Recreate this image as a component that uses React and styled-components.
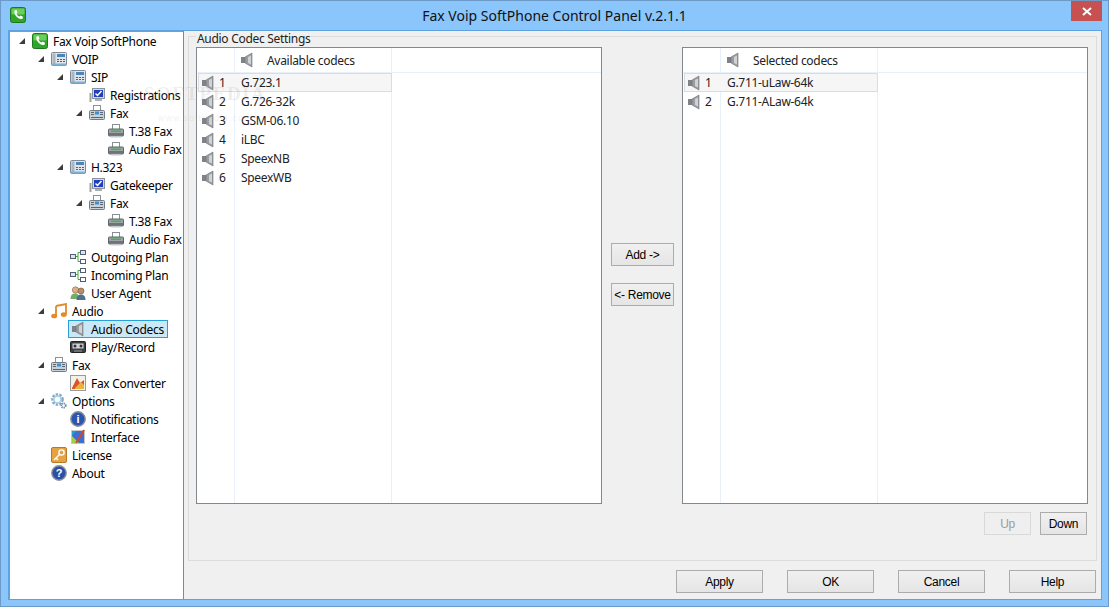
import React from 'react';
import styled, {createGlobalStyle} from 'styled-components';

const GlobalStyle = createGlobalStyle`
  html, body {
    margin: 0;
    padding: 0;
    overflow: hidden;
  }
  body {
    font-family: "Noto Sans", "Open Sans", sans-serif;
    font-size: 12px;
    letter-spacing: -0.3px;
    color: #000;
  }
`;

const Window = styled.div`
  box-sizing: border-box;
  width: 1109px;
  height: 607px;
  display: flex;
  flex-direction: column;
  background: #8ac6fb;
  border: 1px solid #6c99c6;
  position: relative;
  overflow: hidden;
`;

const TitleBar = styled.div`
  height: 29px;
  flex: none;
  display: flex;
  align-items: flex-start;
  padding: 0 6px 0 9px;
`;

const AppIcon = styled.div`
  width: 16px;
  height: 16px;
  margin-top: 6px;
`;

const Title = styled.div`
  flex: 1;
  text-align: center;
  font-size: 14px;
  letter-spacing: 0;
  line-height: 30px;
  padding-left: 12px;
  color: #111;
`;

const CloseButton = styled.div`
  width: 31px;
  height: 20px;
  background: #c75050;
  display: flex;
  align-items: center;
  justify-content: center;
`;

const Client = styled.div`
  flex: 1;
  margin: 0 6px 6px 7px;
  display: flex;
  border: 1px solid #5ea3e0;
  min-height: 0;
`;

const TreePanel = styled.div`
  width: 174px;
  flex: none;
  background: #fff;
  border-right: 1px solid #7b8a99;
  box-shadow: inset 1px 1px 0 #8a99a8;
  padding-top: 1px;
`;

const TreeRow = styled.div`
  height: 18px;
  display: flex;
  align-items: center;
  padding-left: ${p => p.$level * 19}px;
  white-space: nowrap;
`;

const ArrowSlot = styled.div`
  width: 21px;
  flex: none;
  display: flex;
  align-items: center;
  padding-left: 10px;
  box-sizing: border-box;
`;

const TreeArrow = styled.div`
  width: 0;
  height: 0;
  border-style: solid;
  border-width: 0 0 6px 6px;
  border-color: transparent transparent #3c3c3c transparent;
`;

const TreeItem = styled.div`
  height: 18px;
  box-sizing: border-box;
  display: flex;
  align-items: center;
  gap: 5px;
  padding: 0 3px 0 1px;
  border: 1px solid ${p => (p.$selected ? '#26a0da' : 'transparent')};
  background: ${p => (p.$selected ? '#cbe8f6' : 'transparent')};
`;

const TreeIcon = styled.div`
  width: 16px;
  height: 16px;
  flex: none;
  display: flex;
`;

const MainPanel = styled.div`
  flex: 1;
  display: flex;
  flex-direction: column;
  background: #f0f0f0;
  padding: 5px 4px 0 4px;
  min-width: 0;
`;

const GroupBox = styled.div`
  position: relative;
  height: 525px;
  box-sizing: border-box;
  border: 1px solid #dcdcdc;
  padding: 10px 8px 0 7px;
  display: flex;
  flex-direction: column;
`;

const GroupLabel = styled.div`
  position: absolute;
  left: 7px;
  top: -6px;
  padding: 0 1px;
  background: #f0f0f0;
  line-height: 15px;
  color: #222;
`;

const ListsRow = styled.div`
  display: flex;
  height: 457px;
`;

const ListBox = styled.div`
  width: 406px;
  box-sizing: border-box;
  flex: none;
  border: 1px solid #828790;
  background:
    linear-gradient(#e8f0fa, #e8f0fa) 37px 0 / 1px 100% no-repeat,
    linear-gradient(#e8f0fa, #e8f0fa) 194px 0 / 1px 100% no-repeat,
    #fff;
`;

const ListHeader = styled.div`
  height: 25px;
  box-sizing: border-box;
  display: flex;
  align-items: center;
  padding-left: 42px;
  border-bottom: 1px solid #e8f0fa;
  color: #222;
`;

const HeaderLabel = styled.span`
  margin-left: 12px;
`;

const ListRow = styled.div`
  height: 19px;
  box-sizing: border-box;
  margin-left: 1px;
  width: 194px;
  display: grid;
  grid-template-columns: 36px 1fr;
  align-items: center;
  border: 1px solid ${p => (p.$selected ? '#d9dce2' : 'transparent')};
  background: ${p => (p.$selected ? '#f6f6f7' : 'transparent')};
  color: #222;
`;

const IndexCell = styled.div`
  display: flex;
  align-items: center;
  padding-left: 1px;
  gap: 3px;
`;

const NameCell = styled.div`
  padding-left: 6px;
`;

const MoveColumn = styled.div`
  flex: 1;
  display: flex;
  flex-direction: column;
  gap: 17px;
  justify-content: center;
  padding: 0 8px 2px 9px;
`;

const Button = styled.button`
  box-sizing: border-box;
  font-family: "Liberation Sans", sans-serif;
  font-size: 12px;
  letter-spacing: -0.3px;
  height: 23px;
  width: ${p => p.$width || 87}px;
  padding: 0;
  border: 1px solid ${p => (p.disabled ? '#d9d9d9' : '#acacac')};
  background: ${p => (p.disabled ? '#efefef' : 'linear-gradient(#f0f0f0, #e5e5e5)')};
  color: ${p => (p.disabled ? '#9c9c9c' : '#000')};
`;

const OrderRow = styled.div`
  display: flex;
  justify-content: flex-end;
  gap: 9px;
  margin-top: 8px;
  padding-right: 1px;
`;

const FooterRow = styled.div`
  display: flex;
  justify-content: flex-end;
  gap: 24px;
  margin-top: 9px;
  padding-right: 1px;
`;

const Watermark = styled.div`
  position: absolute;
  left: 143px;
  top: 83px;
  pointer-events: none;
  color: rgba(150, 150, 150, 0.16);
  font-family: "Liberation Serif", serif;
  font-size: 19px;
  font-weight: bold;
  letter-spacing: 1.5px;
  line-height: 20px;
`;

const WatermarkUrl = styled.div`
  font-family: "Liberation Sans", sans-serif;
  font-size: 9px;
  font-weight: normal;
  letter-spacing: 1px;
  line-height: 12px;
  margin: 8px 0 0 14px;
`;

const Svg = ({children}) => (
  <svg width="16" height="16" viewBox="0 0 16 16">
    {children}
  </svg>
);

const PhoneIcon = () => (
  <Svg>
    <rect x="0.5" y="0.5" width="15" height="15" rx="2" fill="#2fa62a" stroke="#1c7a1a" />
    <rect x="1.5" y="1.5" width="13" height="6" rx="1" fill="#6ccc5c" />
    <path d="M4.5 3.5 L6.5 3 L7.5 5.5 L6.5 6.5 C7 8 8 9 9.5 9.5 L10.5 8.5 L13 9.8 L12.5 11.8 C8.5 13 3.5 8 4.5 3.5 Z" fill="#fff" />
  </Svg>
);

const DeskPhoneIcon = () => (
  <Svg>
    <rect x="0.5" y="1.5" width="15" height="13" rx="1" fill="#dfe5ea" stroke="#7d8a96" />
    <rect x="1.5" y="2.5" width="3" height="11" fill="#a9b6c2" />
    <rect x="6" y="3" width="8" height="3" fill="#4c86b8" />
    <path d="M6 8h2v1H6zM9 8h2v1H9zM12 8h2v1h-2zM6 10h2v1H6zM9 10h2v1H9zM12 10h2v1h-2z" fill="#56616c" />
    <rect x="1" y="12.5" width="14" height="2" fill="#7fb1d6" />
  </Svg>
);

const MonitorIcon = () => (
  <Svg>
    <rect x="0.5" y="6" width="2" height="9" fill="#9aa59a" />
    <rect x="3.5" y="1.5" width="12" height="10" fill="#d4d8dc" stroke="#8c939a" />
    <rect x="5" y="3" width="9" height="7" fill="#1f3fc0" />
    <path d="M6.5 6.5 L8.5 8.5 L12.5 4" fill="none" stroke="#fff" strokeWidth="1.5" />
    <rect x="6" y="12" width="7" height="2" fill="#aab0b6" />
  </Svg>
);

const FaxIcon = () => (
  <Svg>
    <rect x="4.5" y="0.5" width="7" height="5" fill="#fff" stroke="#8a939c" />
    <rect x="0.5" y="5.5" width="15" height="9" rx="1" fill="#c8d0d8" stroke="#717c87" />
    <rect x="6" y="6.5" width="4" height="3" fill="#3f8fd0" />
    <path d="M2 7h3v1H2zM2 9h3v1H2zM11 7h3v1h-3zM11 9h3v1h-3z" fill="#5a6670" />
    <path d="M2 12h12v1H2z" fill="#59646e" />
  </Svg>
);

const PrinterIcon = () => (
  <Svg>
    <rect x="4.5" y="1.5" width="7" height="5" fill="#fff" stroke="#8a8f94" />
    <rect x="0.5" y="6" width="15" height="7" rx="1" fill="#9da3a8" stroke="#5f6468" />
    <rect x="3" y="7.5" width="10" height="1.5" fill="#4caf50" />
    <rect x="1" y="10" width="14" height="2.5" fill="#6d7377" />
    <rect x="3" y="13" width="10" height="1.5" fill="#c4c8cb" />
  </Svg>
);

const SpeakerIcon = () => (
  <Svg>
    <rect x="2" y="5" width="4" height="6" fill="#7f8388" />
    <path d="M6 5 L13 1 L13 15 L6 11 Z" fill="#999da1" stroke="#6e7276" strokeWidth="0.6" />
    <path d="M9 5 L12 3.5 L12 12.5 L9 11 Z" fill="#d0d3d6" />
  </Svg>
);

const FlowIcon = ({flip}) => (
  <Svg>
    <rect x="0.5" y="5.5" width="5" height="4" fill="#dfe4ea" stroke="#4f5f75" />
    <rect x="10.5" y="1.5" width="5" height="4" fill={flip ? '#fff' : '#dfe4ea'} stroke="#4f5f75" />
    <rect x="10.5" y="10.5" width="5" height="4" fill="#fff" stroke="#4f5f75" />
    <path d="M6 7.5 H8 V3.5 H10 M8 7.5 V12.5 H10" fill="none" stroke="#49a53e" />
  </Svg>
);

const UsersIcon = () => (
  <Svg>
    <circle cx="5.5" cy="5" r="3.2" fill="#d8b184" stroke="#8c6a45" strokeWidth="0.6" />
    <path d="M0.5 14 C0.5 9.5 3 8.5 5.5 8.5 C8 8.5 9 10 9 14 Z" fill="#6fae6b" />
    <circle cx="11" cy="6" r="3" fill="#b98d66" stroke="#6d5138" strokeWidth="0.6" />
    <path d="M6.5 15 C6.5 11 8.5 9.5 11 9.5 C13.5 9.5 15.5 11 15.5 15 Z" fill="#50708c" />
  </Svg>
);

const MusicIcon = () => (
  <Svg>
    <path d="M5 3 L15 1 L15 11.5" fill="none" stroke="#e08a30" strokeWidth="1.8" />
    <path d="M5 3 L5 13" fill="none" stroke="#e08a30" strokeWidth="1.8" />
    <ellipse cx="3.2" cy="13" rx="3" ry="2.3" fill="#e58a2c" />
    <ellipse cx="12.8" cy="11.6" rx="3" ry="2.3" fill="#e58a2c" />
  </Svg>
);

const TapeIcon = () => (
  <Svg>
    <rect x="0.5" y="2.5" width="15" height="11" rx="1" fill="#3c4043" stroke="#202224" />
    <rect x="2.5" y="4.5" width="11" height="5" fill="#cfd3d6" />
    <circle cx="5" cy="7" r="1.5" fill="#333" />
    <circle cx="11" cy="7" r="1.5" fill="#333" />
    <rect x="4" y="11" width="8" height="2" fill="#6c7074" />
  </Svg>
);

const PictureIcon = () => (
  <Svg>
    <rect x="0.5" y="0.5" width="15" height="15" fill="#f4f0e6" stroke="#9a9a9a" />
    <path d="M2 13 L7 3 L10 8 L14 5 L14 14 L2 14 Z" fill="#d8532a" />
    <path d="M5 13 L11 7 L14 10 L14 14 L5 14 Z" fill="#e9b33c" />
  </Svg>
);

const GearIcon = () => (
  <Svg>
    <circle cx="6.5" cy="6.5" r="4.8" fill="none" stroke="#79a9cf" strokeWidth="3" strokeDasharray="2.2 1.2" />
    <circle cx="6.5" cy="6.5" r="3.6" fill="none" stroke="#aecde4" strokeWidth="1.6" />
    <circle cx="12.5" cy="12.5" r="2.2" fill="none" stroke="#6d8aa0" strokeWidth="1.8" strokeDasharray="1.2 .7" />
  </Svg>
);

const RoundIcon = ({fill, children}) => (
  <Svg>
    <circle cx="8" cy="8" r="7.2" fill={fill} stroke="#8b9096" strokeWidth="1.4" />
    <text x="8" y="12" textAnchor="middle" fontSize="11" fontWeight="bold" fontFamily="Liberation Sans, sans-serif" fill="#fff">
      {children}
    </text>
  </Svg>
);

const BrushIcon = () => (
  <Svg>
    <rect x="1.5" y="1.5" width="13" height="13" fill="#3d6fd0" stroke="#c8c8c8" />
    <path d="M2 14 L2 7 L9 14 Z" fill="#9ed04a" />
    <path d="M2 7 L2 2 L6 2 Z" fill="#2a9ad8" />
    <path d="M6 14 L14 1" stroke="#d8452a" strokeWidth="1.8" fill="none" />
  </Svg>
);

const KeyIcon = () => (
  <Svg>
    <rect x="0.5" y="0.5" width="15" height="15" rx="1.5" fill="#e5a344" stroke="#b87a22" />
    <circle cx="10.5" cy="5.5" r="2.6" fill="none" stroke="#fff" strokeWidth="1.4" />
    <path d="M8.5 7.5 L3 13 M5 11 L7 13" stroke="#fff" strokeWidth="1.4" fill="none" />
  </Svg>
);

const InfoIcon = () => <RoundIcon fill="#2a56b0">i</RoundIcon>;
const HelpIcon = () => <RoundIcon fill="#2a4fa8">?</RoundIcon>;
const PlanIcon = () => <FlowIcon />;
const IncomingIcon = () => <FlowIcon flip />;

const treeItems = [
  {level: 0, label: 'Fax Voip SoftPhone', Icon: PhoneIcon, open: true},
  {level: 1, label: 'VOIP', Icon: DeskPhoneIcon, open: true},
  {level: 2, label: 'SIP', Icon: DeskPhoneIcon, open: true},
  {level: 3, label: 'Registrations', Icon: MonitorIcon},
  {level: 3, label: 'Fax', Icon: FaxIcon, open: true},
  {level: 4, label: 'T.38 Fax', Icon: PrinterIcon},
  {level: 4, label: 'Audio Fax', Icon: PrinterIcon},
  {level: 2, label: 'H.323', Icon: DeskPhoneIcon, open: true},
  {level: 3, label: 'Gatekeeper', Icon: MonitorIcon},
  {level: 3, label: 'Fax', Icon: FaxIcon, open: true},
  {level: 4, label: 'T.38 Fax', Icon: PrinterIcon},
  {level: 4, label: 'Audio Fax', Icon: PrinterIcon},
  {level: 2, label: 'Outgoing Plan', Icon: PlanIcon},
  {level: 2, label: 'Incoming Plan', Icon: IncomingIcon},
  {level: 2, label: 'User Agent', Icon: UsersIcon},
  {level: 1, label: 'Audio', Icon: MusicIcon, open: true},
  {level: 2, label: 'Audio Codecs', Icon: SpeakerIcon, selected: true},
  {level: 2, label: 'Play/Record', Icon: TapeIcon},
  {level: 1, label: 'Fax', Icon: FaxIcon, open: true},
  {level: 2, label: 'Fax Converter', Icon: PictureIcon},
  {level: 1, label: 'Options', Icon: GearIcon, open: true},
  {level: 2, label: 'Notifications', Icon: InfoIcon},
  {level: 2, label: 'Interface', Icon: BrushIcon},
  {level: 1, label: 'License', Icon: KeyIcon},
  {level: 1, label: 'About', Icon: HelpIcon},
];

const availableCodecs = ['G.723.1', 'G.726-32k', 'GSM-06.10', 'iLBC', 'SpeexNB', 'SpeexWB'];
const selectedCodecs = ['G.711-uLaw-64k', 'G.711-ALaw-64k'];

const CodecList = ({title, codecs}) => (
  <ListBox>
    <ListHeader>
      <SpeakerIcon />
      <HeaderLabel>{title}</HeaderLabel>
    </ListHeader>
    {codecs.map((name, i) => (
      <ListRow key={name} $selected={i === 0}>
        <IndexCell>
          <SpeakerIcon />
          {i + 1}
        </IndexCell>
        <NameCell>{name}</NameCell>
      </ListRow>
    ))}
  </ListBox>
);

export default function App() {
  return (
    <>
      <GlobalStyle />
      <Window>
        <TitleBar>
          <AppIcon>
            <PhoneIcon />
          </AppIcon>
          <Title>Fax Voip SoftPhone Control Panel v.2.1.1</Title>
          <CloseButton>
            <svg width="10" height="9" viewBox="0 0 10 9">
              <path d="M1 1 L9 8 M9 1 L1 8" stroke="#fff" strokeWidth="2" />
            </svg>
          </CloseButton>
        </TitleBar>
        <Client>
          <TreePanel>
            {treeItems.map(({level, label, Icon, open, selected}, i) => (
              <TreeRow key={i} $level={level}>
                <ArrowSlot>{open && <TreeArrow />}</ArrowSlot>
                <TreeItem $selected={selected}>
                  <TreeIcon>
                    <Icon />
                  </TreeIcon>
                  {label}
                </TreeItem>
              </TreeRow>
            ))}
          </TreePanel>
          <MainPanel>
            <GroupBox>
              <GroupLabel>Audio Codec Settings</GroupLabel>
              <ListsRow>
                <CodecList title="Available codecs" codecs={availableCodecs} />
                <MoveColumn>
                  <Button $width={63}>Add -&gt;</Button>
                  <Button $width={63}>&lt;- Remove</Button>
                </MoveColumn>
                <CodecList title="Selected codecs" codecs={selectedCodecs} />
              </ListsRow>
              <OrderRow>
                <Button $width={47} disabled>Up</Button>
                <Button $width={47}>Down</Button>
              </OrderRow>
            </GroupBox>
            <FooterRow>
              <Button>Apply</Button>
              <Button>OK</Button>
              <Button>Cancel</Button>
              <Button>Help</Button>
            </FooterRow>
          </MainPanel>
        </Client>
        <Watermark>
          SOFTPEDIA
          <WatermarkUrl>www.softpedia.com</WatermarkUrl>
        </Watermark>
      </Window>
    </>
  );
}
